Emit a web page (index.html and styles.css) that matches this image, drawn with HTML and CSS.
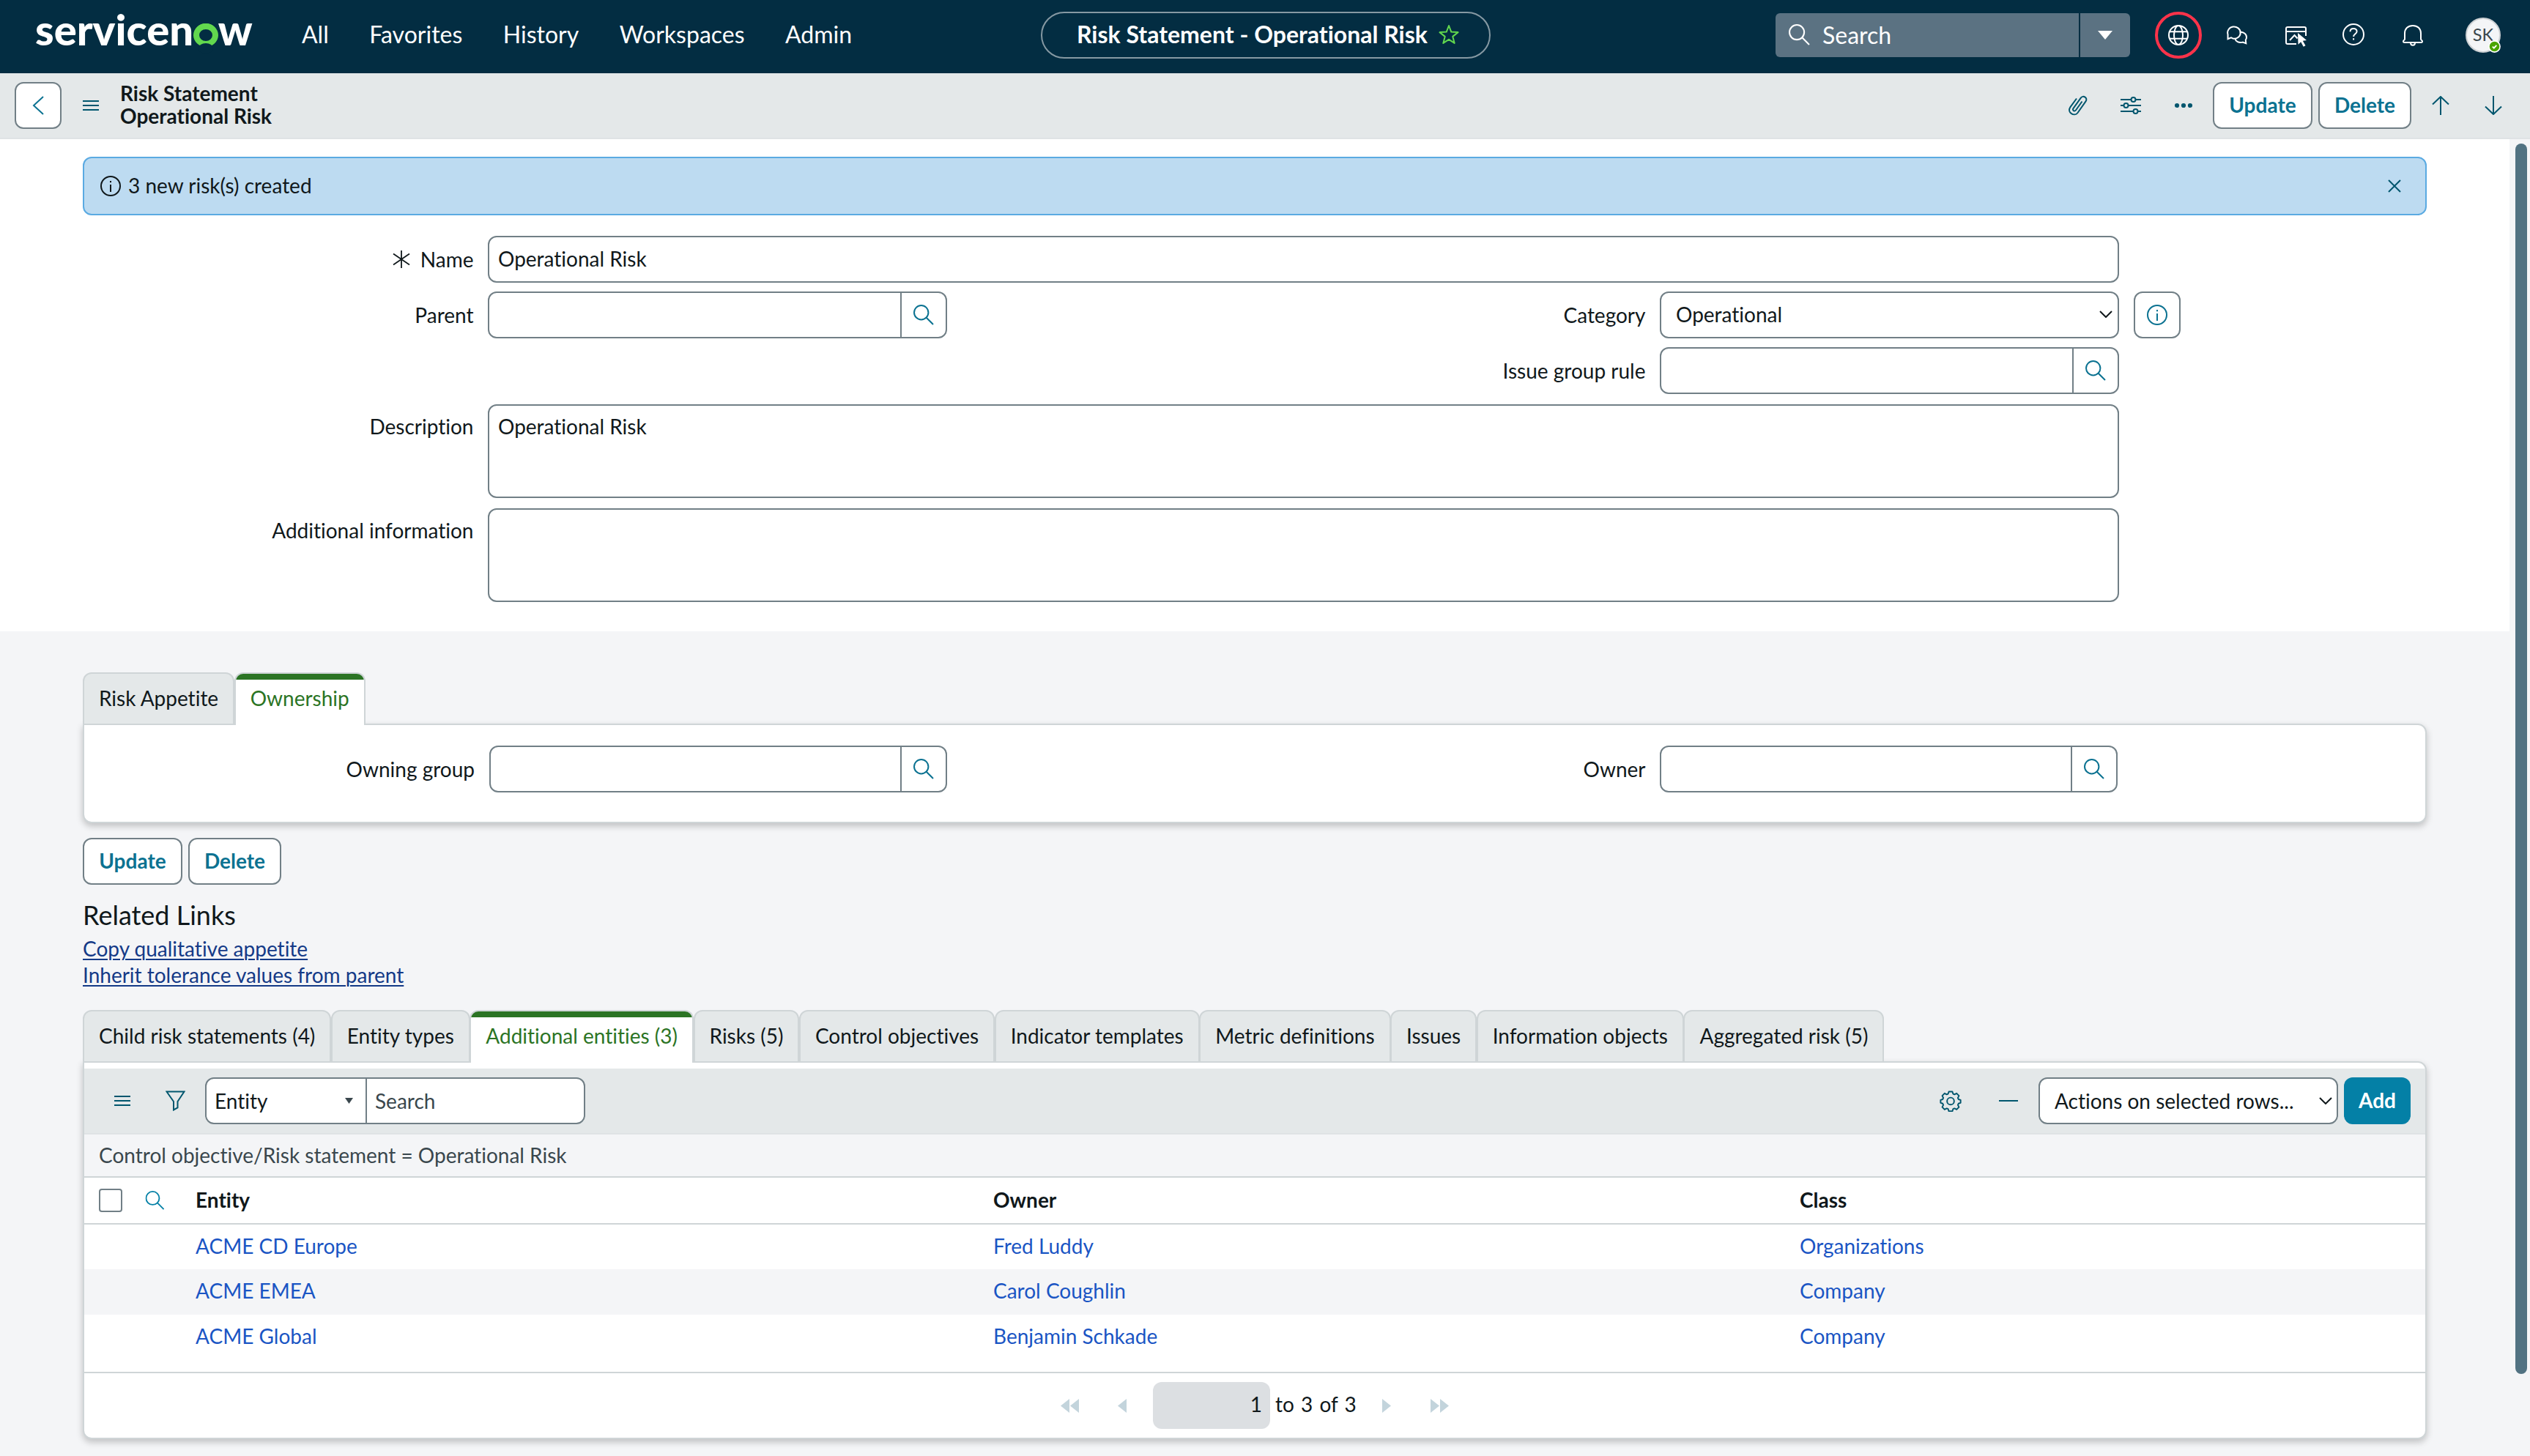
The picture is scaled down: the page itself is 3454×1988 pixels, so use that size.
FILE: index.html
```html
<!DOCTYPE html>
<html lang="en">
<head>
<meta charset="utf-8">
<title>Risk Statement - Operational Risk</title>
<link rel="stylesheet" href="styles.css">
</head>
<body>
<svg width="0" height="0" class="defs" aria-hidden="true">
  <symbol id="search" viewBox="0 0 28 28"><circle cx="10.7" cy="10.7" r="9.7"/><path d="M17.7 17.7L27 27"/></symbol>
  <symbol id="info" viewBox="0 0 28 28"><circle cx="14" cy="14" r="13"/><path d="M14 12v10M14 7v2.2"/></symbol>
  <symbol id="chev" viewBox="0 0 18 10"><path d="M1 1l8 8 8-8"/></symbol>
  <symbol id="menu" viewBox="0 0 22 16"><path d="M0 2h22M0 8h22M0 14h22"/></symbol>
</svg>

<header class="topbar">
  <div class="topbar-left">
    <div class="logo">servicen<span class="logo-o">o</span>w</div>
    <nav class="nav"><span>All</span><span>Favorites</span><span>History</span><span>Workspaces</span><span>Admin</span></nav>
  </div>
  <div class="pill"><span>Risk Statement - Operational Risk</span>
    <svg class="star" width="30" height="28" viewBox="0 0 30 28"><path d="M15 2l3.300 8.600 9.200.5-7.200 5.800 2.400 9L15 20.800l-7.700 5.100 2.400-9L2.500 11.100l9.200-.5z"/></svg>
  </div>
  <div class="topbar-right">
    <div class="gsearch">
      <div class="gsearch-field"><svg class="ico" width="29" height="29"><use href="#search"/></svg><span>Search</span></div>
      <div class="gsearch-drop"><svg width="20" height="12" viewBox="0 0 20 12"><path d="M0 0h20L10 12z" fill="#fff"/></svg></div>
    </div>
    <div class="globe"><svg class="ico" width="28" height="28" viewBox="0 0 28 28"><circle cx="14" cy="14" r="13"/><ellipse cx="14" cy="14" rx="6" ry="13"/><path d="M2 9.300h24M2 18.700h24"/></svg></div>
    <svg class="ico chat" width="30" height="26" viewBox="0 0 30 26"><path d="M2.500 18.200V12A8.800 8.200 0 1 1 10 17.800L7 16.300z"/><path d="M18.500 8.800c5.500-.6 9.500 2.600 9.500 7 0 1.500-.4 2.700-1.200 3.700l.5 4.800-4.600-1.700c-5.200 1.300-9.500-1-10.500-5.100"/></svg>
    <svg class="ico window" width="30" height="28" viewBox="0 0 30 28"><path d="M15 24H3a2 2 0 0 1-2-2V3a2 2 0 0 1 2-2h23a2 2 0 0 1 2 2v10M1 7h27M6 19l6.500-7 4 4.500"/><path d="M17 9l12 10-5.200.8 3.700 6.400-2.800 1.500-3.500-6.500-3.700 3.600z" fill="#fff" stroke="none"/></svg>
    <svg class="ico help" width="30" height="30" viewBox="0 0 30 30"><circle cx="15" cy="15" r="14"/><path d="M10.500 11.200c0-2.700 2-4.300 4.600-4.300s4.500 1.700 4.500 4c0 3.200-4.500 3.600-4.500 7.100M15.100 20.200v2.200"/></svg>
    <svg class="ico bell" width="28" height="30" viewBox="0 0 28 30"><path d="M3 20.500V12.500C3 6 7.500 2 14 2s11 4 11 10.500v8c0 1 2 1.500 2 3s-.8 1.500-2 1.500H3c-1.200 0-2-.2-2-1.500s2-2 2-3zM11 25.500c0 2 1.200 3.200 3 3.200s3-1.200 3-3.200"/></svg>
    <div class="avatar">SK<svg class="presence" width="17" height="17" viewBox="0 0 17 17"><circle cx="8.500" cy="8.500" r="7.600" fill="#4aa400" stroke="#fff" stroke-width="1.600"/><path d="M5.800 8.600l2 2 3.500-3.700" fill="none" stroke="#fff" stroke-width="1.900"/></svg></div>
  </div>
</header>

<div class="formbar">
  <div class="btn back"><svg width="16" height="26" viewBox="0 0 16 26"><path d="M15 1L2 13l13 12"/></svg></div>
  <svg class="menu" width="22" height="16"><use href="#menu"/></svg>
  <div class="form-title">Risk Statement<br>Operational Risk</div>
  <div class="form-actions">
    <svg class="fi clip" width="28" height="30" viewBox="0 0 28 30"><path d="M19.500 9.500l-8.600 12c-1.700 2.300-5.200 0-3.500-2.400L17.800 4.600c3-4.200 10-.2 6.700 4.800L13.500 25C9 31-1.500 24.500 3.300 17.400L12 5.500"/></svg>
    <svg class="fi sliders" width="28" height="24" viewBox="0 0 28 24"><path d="M0 4h14M21 4h7M0 12h4M11 12h17M0 20h17M24 20h4"/><circle cx="17.500" cy="4" r="3"/><circle cx="7.500" cy="12" r="3"/><circle cx="20.500" cy="20" r="3"/></svg>
    <svg class="dots" width="24" height="8" viewBox="0 0 24 8"><circle cx="3" cy="4" r="3.100"/><circle cx="12" cy="4" r="3.100"/><circle cx="21" cy="4" r="3.100"/></svg>
    <div class="btn w-update">Update</div>
    <div class="btn w-delete">Delete</div>
    <svg class="fi up" width="24" height="26" viewBox="0 0 24 26"><path d="M12 1v25M1 11.500L12 1l11 10.500"/></svg>
    <svg class="fi down" width="24" height="26" viewBox="0 0 24 26"><path d="M12 0v25M1 14.500L12 25l11-10.500"/></svg>
  </div>
</div>

<div class="body">
  <main class="content">
    <section class="form">
      <div class="notice">
        <svg class="dark" width="28" height="28"><use href="#info"/></svg><span>3 new risk(s) created</span>
        <svg class="fi close" width="18" height="18" viewBox="0 0 18 18"><path d="M1 1l16 16M17 1L1 17"/></svg>
      </div>
      <div class="row">
        <label class="lbl"><svg class="dark thin" width="24" height="24" viewBox="0 0 24 24"><path d="M12 0v24M1 4.500l22 15M23 4.500l-22 15"/></svg>Name</label>
        <div class="field grow">Operational Risk</div>
      </div>
      <div class="row info-row">
        <label class="lbl">Parent</label>
        <div class="field ref"><div class="ref-btn"><svg width="28" height="28"><use href="#search"/></svg></div></div>
        <label class="lbl lbl-right">Category</label>
        <div class="field select">Operational<svg class="dark" width="18" height="10"><use href="#chev"/></svg></div>
        <div class="field info-btn"><svg width="28" height="28"><use href="#info"/></svg></div>
      </div>
      <div class="row">
        <label class="lbl lbl-right">Issue group rule</label>
        <div class="field ref"><div class="ref-btn"><svg width="28" height="28"><use href="#search"/></svg></div></div>
      </div>
      <div class="row area-row">
        <label class="lbl">Description</label>
        <div class="field area">Operational Risk</div>
      </div>
      <div class="row area-row">
        <label class="lbl">Additional information</label>
        <div class="field area"></div>
      </div>
    </section>

    <section class="lower">
      <div class="tabs"><div class="tab">Risk Appetite</div><div class="tab active">Ownership</div></div>
      <div class="panel owner-panel">
        <label class="lbl">Owning group</label>
        <div class="field ref"><div class="ref-btn"><svg width="28" height="28"><use href="#search"/></svg></div></div>
        <label class="lbl lbl-right">Owner</label>
        <div class="field ref"><div class="ref-btn"><svg width="28" height="28"><use href="#search"/></svg></div></div>
      </div>
      <div class="actions"><div class="btn w-update">Update</div><div class="btn w-delete">Delete</div></div>
      <h2 class="links-title">Related Links</h2>
      <div class="links"><a>Copy qualitative appetite</a><a>Inherit tolerance values from parent</a></div>

      <div class="tabs list-tabs">
        <div class="tab">Child risk statements (4)</div><div class="tab">Entity types</div><div class="tab active">Additional entities (3)</div><div class="tab">Risks (5)</div><div class="tab">Control objectives</div><div class="tab">Indicator templates</div><div class="tab">Metric definitions</div><div class="tab">Issues</div><div class="tab">Information objects</div><div class="tab">Aggregated risk (5)</div>
      </div>
      <div class="panel list-panel">
        <div class="toolbar">
          <svg class="menu" width="22" height="16"><use href="#menu"/></svg>
          <svg class="fi funnel" width="27" height="28" viewBox="0 0 27 28"><path d="M1.500 1.500h24L16.500 15v8.500l-5.500 3V15z"/></svg>
          <div class="field combo"><div class="combo-col">Entity<svg width="11" height="8" viewBox="0 0 11 8"><path d="M0 0h11L5.500 8z" fill="#3a474d"/></svg></div><div class="combo-text">Search</div></div>
          <svg class="fi gear" width="30" height="30" viewBox="-0.5 -0.5 31 31"><path d="M12.500 2h5l1 3.200 2 .8 3-1.500 3.300 3.400-1.500 3 .8 2 3 1v4l-3 1-.8 2 1.500 3-3.300 3.400-3-1.500-2 .8-1 3.200h-5l-1-3.200-2-.8-3 1.500-3.300-3.400 1.500-3-.8-2-3-1v-4l3-1 .8-2-1.500-3L6.500 4.500l3 1.500 2-.8z"/><circle cx="15" cy="15.500" r="5"/></svg>
          <svg class="fi minus" width="26" height="4" viewBox="0 0 26 4"><path d="M0 2h26"/></svg>
          <div class="field bulk">Actions on selected rows...<svg class="dark" width="18" height="10"><use href="#chev"/></svg></div>
          <div class="add">Add</div>
        </div>
        <div class="crumb">Control objective/Risk statement = Operational Risk</div>
        <div class="tr th"><div class="tools"><span class="check"></span><svg class="thsearch" width="27" height="26" viewBox="0 0 28 28"><use href="#search"/></svg></div><div>Entity</div><div>Owner</div><div>Class</div></div>
        <div class="tr"><div></div><div>ACME CD Europe</div><div>Fred Luddy</div><div>Organizations</div></div>
        <div class="tr alt"><div></div><div>ACME EMEA</div><div>Carol Coughlin</div><div>Company</div></div>
        <div class="tr"><div></div><div>ACME Global</div><div>Benjamin Schkade</div><div>Company</div></div>
        <div class="pager">
          <svg class="first" width="26" height="19" viewBox="0 0 26 19"><path d="M12 0v19L0 9.500zM25 0v19L13 9.500z"/></svg>
          <svg class="prev" width="13" height="19" viewBox="0 0 13 19"><path d="M12 0v19L0 9.500z"/></svg>
          <div class="page">1</div><span class="total">to 3 of 3</span>
          <svg class="next" width="13" height="19" viewBox="0 0 13 19"><path d="M1 0v19l12-9.500z"/></svg>
          <svg class="last" width="26" height="19" viewBox="0 0 26 19"><path d="M1 0v19l12-9.500zM14 0v19l12-9.500z"/></svg>
        </div>
      </div>
    </section>
  </main>
  <div class="scroll"><div class="thumb"></div></div>
</div>
</body>
</html>
```
FILE: styles.css
```css
*,*::before,*::after{box-sizing:border-box}
body{margin:0;width:3454px;height:1988px;overflow:hidden;font:28px/36px Lato,"Liberation Sans",sans-serif;font-variant-ligatures:none;color:#10181b;background:#f4f5f7}
svg{display:block;flex:none;fill:none;stroke:#0b7291;stroke-width:2}
.defs{position:absolute}
.ico{stroke:#fff}
.dark{stroke:#10181b}
.thin{stroke-width:1.8}
.fi{stroke:#00566e}

/* global header */
.topbar{display:flex;height:100px;background:#032d42;color:#fff;font-size:32px}
.topbar-left{display:flex;width:1421px;padding-left:48px}
.logo{width:364px;margin-top:10px;font-size:58px;line-height:60px;font-weight:900}
.logo-o{display:inline-block;position:relative;color:#62d84e}
/* ring and notch that turn the letter into the brand mark */
.logo-o::before{content:"";position:absolute;left:0;top:22px;width:34px;height:32px;border:8px solid #62d84e;border-radius:50%;background:#032d42}
.logo-o::after{content:"";position:absolute;left:7px;top:49px;width:20px;height:14px;border-radius:50%;background:#032d42}
.nav{display:flex;gap:55.500px;line-height:94px}
.pill{display:flex;align-items:center;gap:14px;width:614px;height:64px;margin-top:16px;padding:0 0 2px 47px;border:2px solid #8699a3;border-radius:32px;font-weight:700}
.pill svg{stroke:#62d84e;stroke-linejoin:round}
.topbar-right{display:flex;flex:1;justify-content:flex-end;padding-right:40px}
.gsearch{display:flex;gap:2px;width:484px;height:60px;margin-top:18px}
.gsearch-field{display:flex;align-items:center;flex:1;gap:17px;padding:0 0 1px 18px;background:#5b7282;border-radius:6px 0 0 6px}
.gsearch-drop{display:flex;align-items:center;width:68px;padding-left:24px;background:#5b7282;border-radius:0 6px 6px 0}
.gsearch-drop svg{stroke:none}
.globe{display:grid;place-items:center;width:64px;height:64px;margin:16px 0 0 34px;border:4px solid #ff334a;border-radius:50%}
.chat{margin:35px 0 0 33px}
.window{margin:36px 0 0 51px}
.help{margin:32px 0 0 48px}
.bell{margin:33px 0 0 52px}
.avatar{position:relative;width:48px;height:48px;margin:24px 0 0 58px;border:2px solid #ccd0d3;border-radius:50%;background:#f4f5f7;color:#3a474d;font-size:23.500px;line-height:42px;text-align:center}
.presence{position:absolute;right:-1.500px;bottom:-1.500px}

/* form header */
.formbar{display:flex;height:90px;padding:12px 38px 0 20px;background:#e4e8e9;border-bottom:2px solid #dfe3e5}
.btn{display:flex;align-items:center;justify-content:center;height:64px;padding-bottom:3px;border:2px solid #717f86;border-radius:12px;background:#fff;color:#0b7291;font-weight:700}
.w-update{width:136px}
.w-delete{width:127px}
.back{width:64px;padding:0}
.formbar .menu{margin:24px 0 0 29px}
.menu{stroke:#00566e}
.form-title{margin:0 0 0 29px;font-weight:700;line-height:31px}
.form-actions{display:flex;margin-left:auto}
.clip{margin:17px 44px 0 0}
.sliders{margin:20px 46px 0 0}
.dots{margin:28px 28px 0 0;fill:#00566e;stroke:none}
.form-actions .w-update{margin-right:8px}
.up{margin:19px 0 0 28px}
.down{margin:19px 0 0 48px}

/* scroll area */
.body{display:flex;height:1798px}
.content{width:3426px}
.scroll{width:28px;padding:6px 4px 0 8px;background:#f4f5f7}
.thumb{width:16px;height:1680px;border-radius:8px;background:#517282}

.form{height:672px;padding:24px 113px 0;background:#fff}
.notice{display:flex;align-items:center;height:80px;margin-bottom:28px;padding:0 33px 1px 22px;border:2px solid #5aaae2;border-radius:12px;background:#bddbf1}
.notice span{margin-left:10px;padding-bottom:1px}
.close{margin-left:auto}
.row{display:flex;justify-content:flex-end;height:64px;margin-bottom:12px;padding-right:420px}
.info-row{padding-right:336px}
.lbl{display:flex;align-items:center;justify-content:flex-end;gap:14px;width:533.500px;height:64px;margin-right:19.500px}
.lbl-right{flex:1}
.field{display:flex;align-items:center;height:64px;border:2px solid #717f86;border-radius:12px;background:#fff}
.grow{flex:1;padding:0 0 2px 12px}
.ref{width:627px;justify-content:flex-end}
.ref-btn{display:grid;place-items:center;width:62px;height:60px;border-left:2px solid #717f86}
.select{width:627px;justify-content:space-between;padding:0 7px 2px 20px}
.info-btn{width:64px;margin-left:20px;justify-content:center}
.area-row{height:128px;margin:14px 0 0}
.row + .area-row{margin-bottom:0}
.area-row .lbl{height:60px}
.area{flex:1;height:128px;align-items:flex-start;padding:10px 0 0 12px}

/* tabs and panels */
.lower{padding:56px 113px 0}
.tabs{display:flex}
.tab{position:relative;height:72px;margin:0 -.5px -2px 0;padding:0 20px;border:2px solid #cfd5d7;border-radius:12px 12px 0 0;background:#e4e8e9;line-height:66px}
.active{border-bottom:0;background:linear-gradient(#2b7424 8px,#fff 8px);color:#2b7424}
.panel{border:2px solid #cfd5d7;border-radius:0 12px 12px 12px;background:#fff;box-shadow:0 4px 10px rgba(0,0,0,.22)}
.owner-panel{display:flex;height:136px;padding:28px 420px 0 0}
.owner-panel .lbl:first-child{width:533px;margin-right:20px}
.owner-panel .field{width:625px}
.actions{display:flex;gap:8px;margin-top:20px}
.links-title{margin:18px 0 0;font-size:36px;line-height:46px;font-weight:400}
.links{display:flex;flex-direction:column;margin-top:6px;line-height:35.500px;color:#143a87}
.links a{text-underline-offset:3px;text-decoration:underline;text-decoration-thickness:2px}

.list-tabs{margin-top:30px}
.list-panel{height:516px;padding-top:8px}
.toolbar{display:flex;align-items:center;height:90px;padding:0 20px 0 41px;background:#e4e8e9;border-bottom:2px solid #dfe3e5}
.funnel{margin-left:48px}
.combo{width:519px;margin-left:27px;padding-bottom:1px}
.combo-col{display:flex;align-items:center;justify-content:space-between;width:219px;height:60px;padding:0 17px 0 11px;border-right:2px solid #717f86}
.combo-col svg{stroke:none}
.combo-text{padding:0 0 0 11px;color:#3a474d}
.gear{margin-left:auto;stroke-linejoin:round}
.minus{margin-left:51px}
.bulk{width:409px;margin-left:28px;padding:0 6px 1px 20px;justify-content:space-between}
.add{width:91px;height:64px;margin-left:8px;border-radius:12px;background:#0480a6;color:#fff;font-weight:700;line-height:62px;text-align:center}
.crumb{height:59px;padding-left:20px;background:#f4f5f7;border-bottom:2px solid #cfd5d7;color:#3a474d;line-height:57px}
.tr{display:grid;grid-template-columns:152px 1089px 1101px 1fr;height:62px;color:#1a55c4;line-height:59px}
.th{height:64px;border-bottom:2px solid #cfd5d7;color:#10181b;font-weight:700;line-height:60px}
.th + .tr{height:61px}
.alt{background:#f4f5f7}
.tools{display:flex;align-items:center;gap:31px;padding-left:20px}
.check{width:32px;height:32px;border:2px solid #717f86;border-radius:4px}
.thsearch{stroke:#0480a6}
.pager{display:flex;align-items:center;height:90px;margin-top:16px;padding-left:1333px;border-top:2px solid #cfd5d7}
.pager svg{fill:#c3d4dc;stroke:none}
.prev{margin-left:52px}
.page{width:160px;height:64px;margin-left:35px;padding-right:11px;border-radius:12px;background:#dcdfe2;line-height:60px;text-align:right}
.total{margin-left:7px;padding-bottom:4px;word-spacing:2px}
.pager .next{margin-left:34px}
.last{margin-left:53px}
```
